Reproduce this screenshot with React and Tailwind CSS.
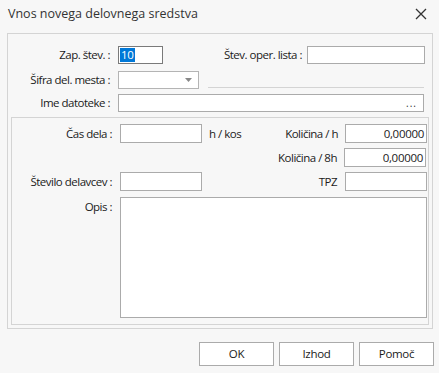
import React from "react";

const font = { fontFamily: '"Open Sans", "Noto Sans", "Liberation Sans", sans-serif' };

function Input({ w, h = "h-[18px]", children, className = "" }) {
  return (
    <div className={`${w} ${h} border border-[#ababab] bg-white flex items-center ${className}`}>
      {children}
    </div>
  );
}

function Label({ w, children, className = "" }) {
  return (
    <div className={`${w} shrink-0 text-right text-[11.5px] tracking-[-0.5px] leading-none text-[#1a1a1a] ${className}`}>{children}</div>
  );
}

export default function App() {
  return (
    <div className="w-[439px] h-[373px] bg-[#f7f7f7] flex flex-col overflow-hidden" style={font}>
      {/* title bar */}
      <div className="h-[33px] flex items-start justify-between pl-[8px] pr-[12px] pt-[4px]">
        <div className="text-[12.5px] leading-[20px] text-[#333]">Vnos novega delovnega sredstva</div>
        <svg width="12" height="12" viewBox="0 0 12 12" className="mt-[4px]">
          <path d="M1 1 L11 11 M11 1 L1 11" stroke="#333" strokeWidth="1.3" fill="none" />
        </svg>
      </div>

      {/* outer panel */}
      <div className="ml-[7px] w-[426px] h-[296px] border border-[#d4d4d4] flex flex-col">
        <div className="flex items-center h-[18px] mt-[12px]">
          <Label w="w-[102px]">Zap. štev. :</Label>
          <div className="ml-[8px] w-[45px] h-[18px] border border-[#7a7a7a] bg-white flex items-center pl-[1px]">
            <span className="bg-[#0078d7] text-white text-[11.5px] tracking-[-0.3px] leading-[14px] px-[1px]">10</span>
          </div>
          <Label w="w-[139px]">Štev. oper. lista :</Label>
          <Input w="w-[118px]" className="ml-[5px]" />
        </div>
        <div className="flex items-center h-[18px] mt-[7px]">
          <Label w="w-[102px]">Šifra del. mesta :</Label>
          <div className="ml-[8px] w-[81px] h-[18px] border border-[#b4b4b4] bg-white flex items-center justify-end pr-[6px]">
            <svg width="7" height="4" viewBox="0 0 7 4">
              <path d="M0 0 L7 0 L3.5 4 Z" fill="#888" />
            </svg>
          </div>
          <div className="ml-[9px] mt-[14px] w-[216px] h-px bg-[#d4d4d4]" />
        </div>
        <div className="flex items-center h-[18px] mt-[5px]">
          <Label w="w-[102px]">Ime datoteke :</Label>
          <Input w="w-[306px]" className="ml-[8px] justify-end pr-[6px]">
            <span className="text-[10px] leading-none text-[#333] tracking-[1px]">...</span>
          </Input>
        </div>

        {/* inner panel */}
        <div className="mt-[5px] ml-[3px] w-[418px] h-[208px] border border-[#d4d4d4] flex flex-col">
          <div className="flex items-center h-[19px] mt-[6px]">
            <Label w="w-[100px]">Čas dela :</Label>
            <Input w="w-[82px]" h="h-[19px]" className="ml-[8px]" />
            <div className="ml-[7px] w-[48px] shrink-0 text-[11.5px] tracking-[-0.5px] leading-none text-[#1a1a1a]">h / kos</div>
            <Label w="w-[88px]" className="-ml-[7px]">Količina / h</Label>
            <Input w="w-[82px]" h="h-[19px]" className="ml-[7px] justify-end pr-[2px]">
              <span className="text-[11.5px] tracking-[-0.3px] leading-none text-[#1a1a1a]">0,00000</span>
            </Input>
          </div>
          <div className="flex items-center h-[19px] mt-[5px]">
            <Label w="w-[325px]">Količina / 8h</Label>
            <Input w="w-[82px]" h="h-[19px]" className="ml-[7px] justify-end pr-[2px]">
              <span className="text-[11.5px] tracking-[-0.3px] leading-none text-[#1a1a1a]">0,00000</span>
            </Input>
          </div>
          <div className="flex items-center h-[19px] mt-[5px]">
            <Label w="w-[100px]">Število delavcev :</Label>
            <Input w="w-[82px]" h="h-[19px]" className="ml-[8px]" />
            <Label w="w-[135px]">TPZ</Label>
            <Input w="w-[82px]" h="h-[19px]" className="ml-[8px]" />
          </div>
          <div className="flex items-start mt-[6px]">
            <Label w="w-[100px]" className="mt-[4px]">Opis :</Label>
            <div className="ml-[8px] w-[307px] h-[121px] border border-[#ababab] bg-white" />
          </div>
        </div>
      </div>

      {/* buttons */}
      <div className="flex gap-[5px] ml-[199px] mt-[13px]">
        {["OK", "Izhod", "Pomoč"].map((t) => (
          <div
            key={t}
            className="w-[75px] h-[24px] border border-[#ababab] bg-white flex items-center justify-center text-[11.5px] tracking-[-0.3px] leading-none text-[#1a1a1a]"
          >
            {t}
          </div>
        ))}
      </div>
    </div>
  );
}
